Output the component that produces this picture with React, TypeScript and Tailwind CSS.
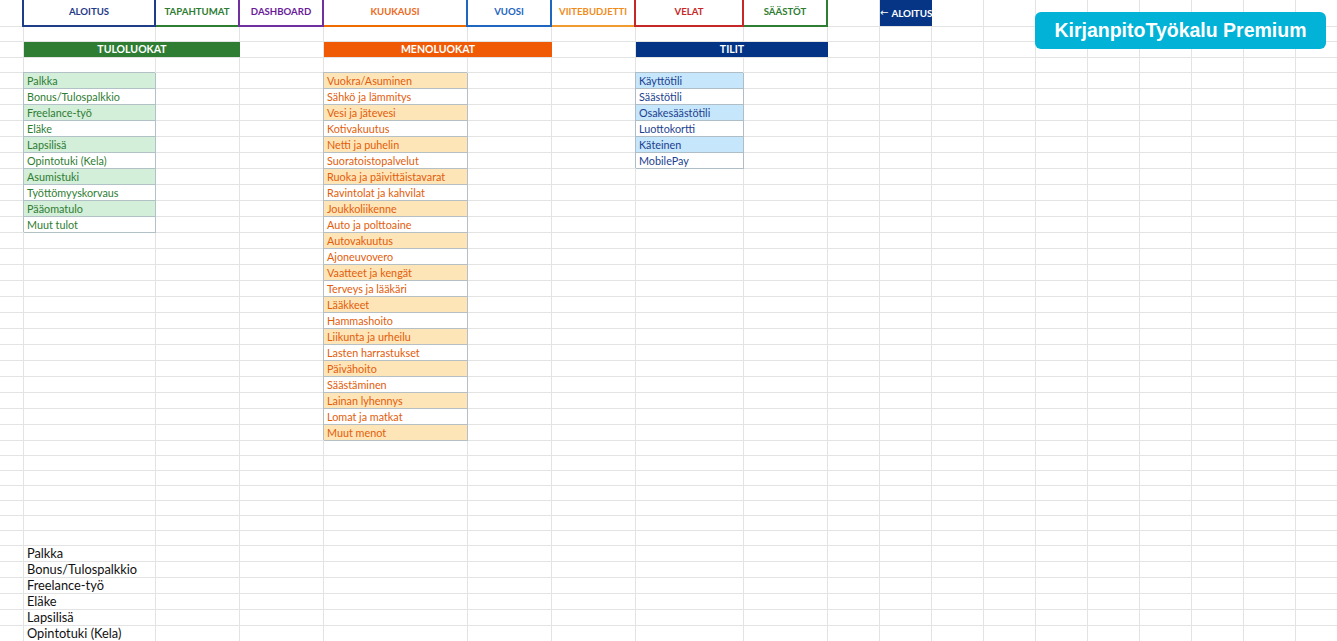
import React from "react";

// Column widths of the sheet (cell box includes its right gridline)
const W = [
  "w-[24px]",
  "w-[132px]",
  "w-[84px]",
  "w-[84px]",
  "w-[144px]",
  "w-[84px]",
  "w-[84px]",
  "w-[108px]",
  "w-[84px]",
  "w-[52px]",
  "w-[52px]",
  "w-[52px]",
  "w-[52px]",
  "w-[52px]",
  "w-[52px]",
  "w-[52px]",
  "w-[52px]",
  "w-[52px]",
  "w-[52px]",
];

const BLANK = "shrink-0 h-full border-r border-b border-[#e3e3e3]";

type Slots = Record<number, React.ReactNode | null>;

function GridRow({ h, slots = {} }: { h: string; slots?: Slots }) {
  const cells: React.ReactNode[] = [];
  for (let i = 0; i < W.length; i++) {
    if (i in slots) {
      if (slots[i] !== null) cells.push(<React.Fragment key={i}>{slots[i]}</React.Fragment>);
      continue;
    }
    cells.push(<div key={i} className={`${W[i]} ${BLANK}`} />);
  }
  return <div className={`flex ${h}`}>{cells}</div>;
}

const incomes = [
  "Palkka",
  "Bonus/Tulospalkkio",
  "Freelance-työ",
  "Eläke",
  "Lapsilisä",
  "Opintotuki (Kela)",
  "Asumistuki",
  "Työttömyyskorvaus",
  "Pääomatulo",
  "Muut tulot",
];

const expenses = [
  "Vuokra/Asuminen",
  "Sähkö ja lämmitys",
  "Vesi ja jätevesi",
  "Kotivakuutus",
  "Netti ja puhelin",
  "Suoratoistopalvelut",
  "Ruoka ja päivittäistavarat",
  "Ravintolat ja kahvilat",
  "Joukkoliikenne",
  "Auto ja polttoaine",
  "Autovakuutus",
  "Ajoneuvovero",
  "Vaatteet ja kengät",
  "Terveys ja lääkäri",
  "Lääkkeet",
  "Hammashoito",
  "Liikunta ja urheilu",
  "Lasten harrastukset",
  "Päivähoito",
  "Säästäminen",
  "Lainan lyhennys",
  "Lomat ja matkat",
  "Muut menot",
];

const accounts = ["Käyttötili", "Säästötili", "Osakesäästötili", "Luottokortti", "Käteinen", "MobilePay"];

const LIST =
  "shrink-0 h-full flex items-center pl-[3px] pt-[1px] text-[10.8px] whitespace-nowrap overflow-hidden";

function IncomeCell({ label, shaded }: { label: string; shaded: boolean }) {
  return (
    <div
      className={`${W[1]} ${LIST} text-[#2e7d32] border-r border-b border-[#b2c1c6] shadow-[-1px_-1px_0_#b2c1c6] ${
        shaded ? "bg-[#d3eed9]" : "bg-white"
      }`}
    >
      {label}
    </div>
  );
}

function ExpenseCell({ label, shaded }: { label: string; shaded: boolean }) {
  return (
    <div
      className={`${W[4]} ${LIST} text-[#e35d0a] border-r border-b border-[#b6c0c4] shadow-[-1px_-1px_0_#b6c0c4] ${
        shaded ? "bg-[#fee5b8]" : "bg-white"
      }`}
    >
      {label}
    </div>
  );
}

function AccountCell({ label, shaded }: { label: string; shaded: boolean }) {
  return (
    <div
      className={`${W[7]} ${LIST} text-[#1b3f8f] border-r border-b border-[#aebdc6] shadow-[-1px_-1px_0_#aebdc6] ${
        shaded ? "bg-[#c6e6fb]" : "bg-white"
      }`}
    >
      {label}
    </div>
  );
}

const NAV = "shrink-0 h-full flex items-center justify-center font-bold text-[9.6px]";

function NavRow() {
  return (
    <div className="flex h-[27px]">
      <div className="w-[22px] shrink-0 h-full border-b border-[#e3e3e3]" />
      <div className={`w-[134px] ${NAV} text-[#1f3c88] border-x-2 border-b-2 border-[#1f3c88]`}>ALOITUS</div>
      <div className={`w-[82px] ${NAV} text-[#2e7d32] border-b-2 border-[#2e7d32]`}>TAPAHTUMAT</div>
      <div className={`w-[86px] ${NAV} text-[#6a1b9a] border-x-2 border-b-2 border-[#7030a0]`}>DASHBOARD</div>
      <div className={`w-[142px] ${NAV} text-[#ec6a1c] border-b-2 border-[#ef6c00]`}>KUUKAUSI</div>
      <div className={`w-[86px] ${NAV} text-[#1e66c0] border-x-2 border-b-2 border-[#1e66c0]`}>VUOSI</div>
      <div className={`w-[82px] ${NAV} text-[#f08c1c] border-b-2 border-[#f09a30]`}>VIITEBUDJETTI</div>
      <div className={`w-[110px] ${NAV} text-[#c62828] border-x-2 border-b-2 border-[#c62828]`}>VELAT</div>
      <div className={`w-[84px] ${NAV} text-[#2e7d32] border-r-2 border-b-2 border-[#2e7d32]`}>SÄÄSTÖT</div>
      <div className={`${W[9]} ${BLANK}`} />
      <div className="w-[52px] shrink-0 h-full bg-[#053584] border-b border-[#e3e3e3] flex items-center whitespace-nowrap text-white font-bold text-[9.8px]">
        <span className="font-['DejaVu_Sans',sans-serif] text-[10px] font-normal mr-[3px] leading-none">←</span>
        <span>ALOITUS</span>
      </div>
      {W.slice(11).map((w, i) => (
        <div key={i} className={`${w} ${BLANK}`} />
      ))}
    </div>
  );
}

const HEADER =
  "shrink-0 h-full flex items-center justify-center text-white font-bold text-[10.5px] border-b border-[#e3e3e3]";

export default function App() {
  const bottomList = incomes.slice(0, 6);
  return (
    <div className="relative w-[1337px] h-[641px] overflow-hidden bg-white font-['Lato','Noto_Sans',sans-serif]">
      <NavRow />
      <GridRow h="h-[15px]" />
      <GridRow
        h="h-[16px]"
        slots={{
          1: <div className={`w-[216px] ${HEADER} bg-[#2e7d32]`}>TULOLUOKAT</div>,
          2: null,
          4: <div className={`w-[228px] ${HEADER} bg-[#f15a05]`}>MENOLUOKAT</div>,
          5: null,
          7: <div className={`w-[192px] ${HEADER} bg-[#023384]`}>TILIT</div>,
          8: null,
        }}
      />
      <GridRow h="h-[15px]" />
      {expenses.map((exp, r) => {
        const slots: Slots = {
          4: <ExpenseCell label={exp} shaded={r % 2 === 0} />,
        };
        if (r < incomes.length) slots[1] = <IncomeCell label={incomes[r]} shaded={r % 2 === 0} />;
        if (r < accounts.length) slots[7] = <AccountCell label={accounts[r]} shaded={r % 2 === 0} />;
        return <GridRow key={exp} h="h-[16px]" slots={slots} />;
      })}
      {Array.from({ length: 7 }).map((_, r) => (
        <GridRow key={`gap-${r}`} h="h-[15px]" />
      ))}
      {bottomList.map((label) => (
        <GridRow
          key={`plain-${label}`}
          h="h-[16px]"
          slots={{
            1: (
              <div
                className={`${W[1]} ${BLANK} flex items-center pl-[3px] text-[12.8px] text-[#111] whitespace-nowrap`}
              >
                {label}
              </div>
            ),
          }}
        />
      ))}

      {/* Floating product badge over the sheet */}
      <div className="absolute left-[1035px] top-[12px] w-[291px] h-[37px] rounded-[6px] bg-[#02b3d7] flex items-center justify-center pt-[1px] text-white font-bold text-[19.5px] font-['Liberation_Sans',Arial,sans-serif]">
        KirjanpitoTyökalu Premium
      </div>
    </div>
  );
}
